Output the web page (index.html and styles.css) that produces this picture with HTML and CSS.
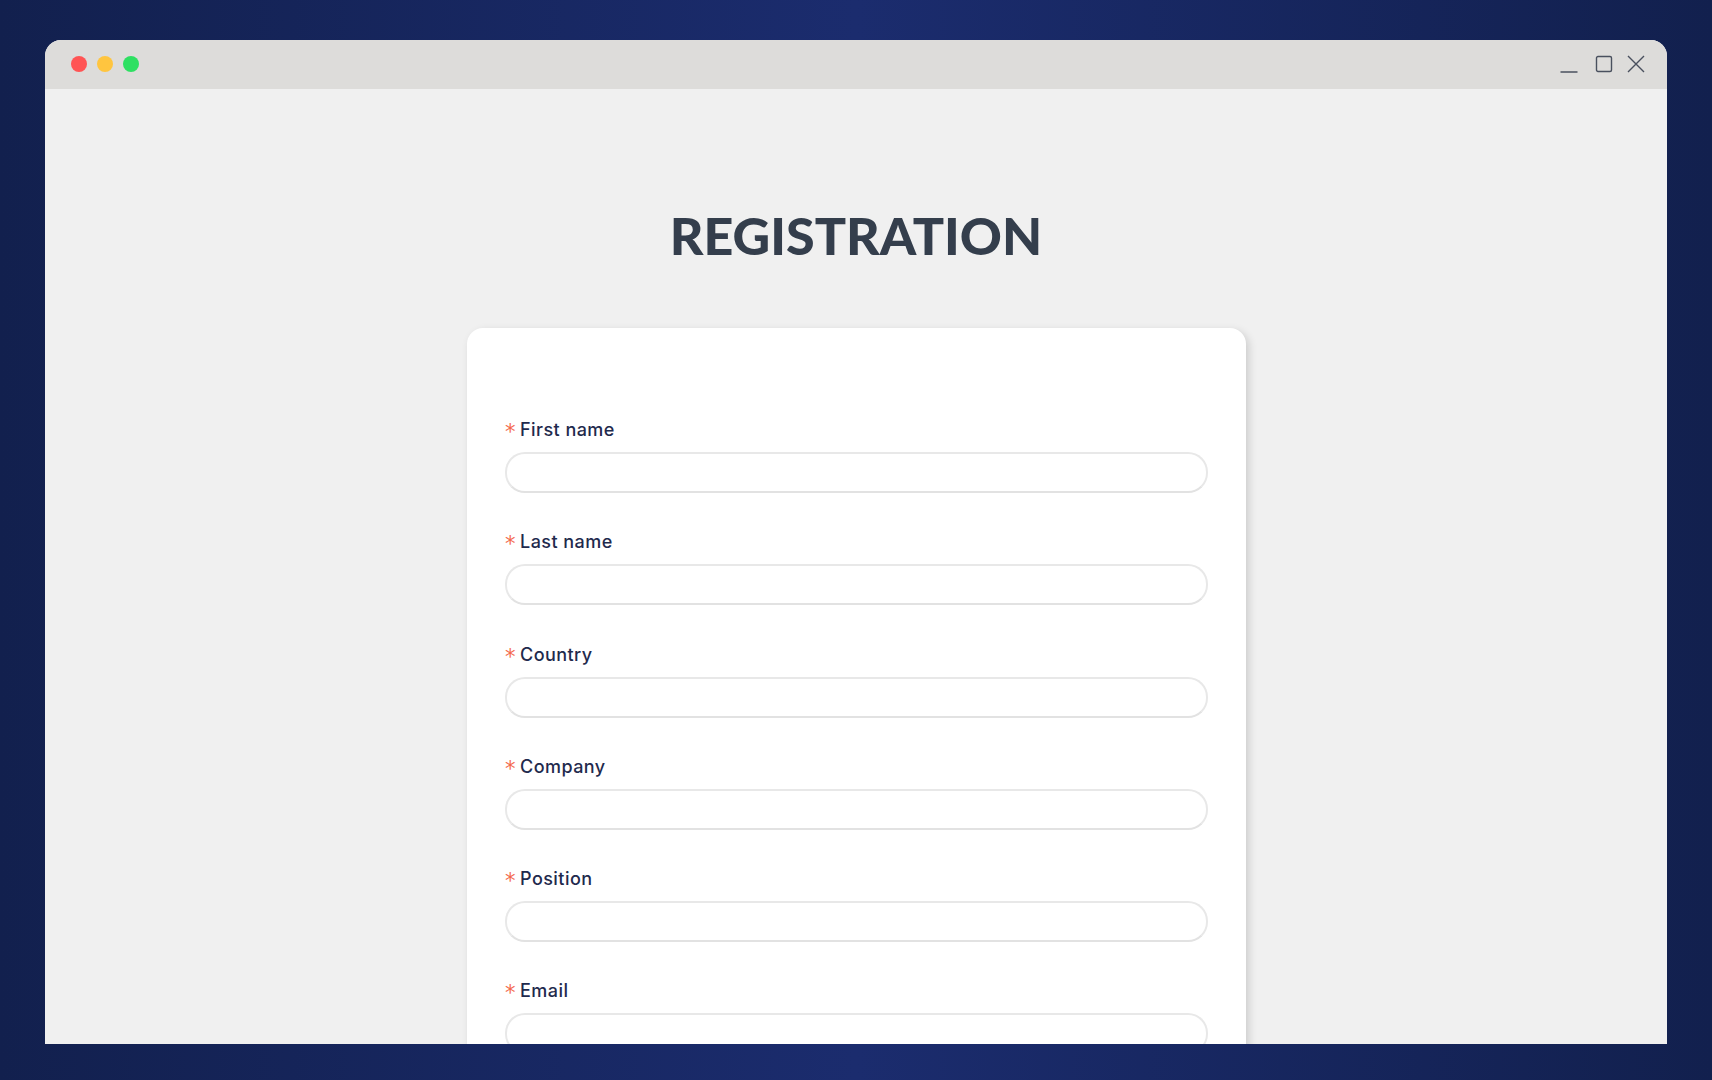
FILE: index.html
```html
<!DOCTYPE html>
<html lang="en">
<head>
  <meta charset="UTF-8" />
  <meta name="viewport" content="width=device-width, initial-scale=1" />
  <title>Registration</title>
  <link rel="stylesheet" href="styles.css">
</head>
<body>
  <div class="window">
    <div class="titlebar">
      <div class="lights">
        <span class="light red"></span>
        <span class="light yellow"></span>
        <span class="light green"></span>
      </div>
      <div class="controls">
        <svg width="18" height="18" viewBox="0 0 18 18"><path d="M0.5 17H17.5" /></svg>
        <svg class="max" width="18" height="18" viewBox="0 0 18 18"><rect x="1.5" y="1.5" width="15" height="15" rx="1.5" /></svg>
        <svg class="close" width="18" height="18" viewBox="0 0 18 18"><path d="M1 1L17 17M17 1L1 17" /></svg>
      </div>
    </div>
    <div class="content">
      <h1 class="title">REGISTRATION</h1>
      <form class="card">
        <div class="field">
          <label><span class="star">*</span>First name</label>
          <input type="text" />
        </div>
        <div class="field">
          <label><span class="star">*</span>Last name</label>
          <input type="text" />
        </div>
        <div class="field">
          <label><span class="star">*</span>Country</label>
          <input type="text" />
        </div>
        <div class="field">
          <label><span class="star">*</span>Company</label>
          <input type="text" />
        </div>
        <div class="field">
          <label><span class="star">*</span>Position</label>
          <input type="text" />
        </div>
        <div class="field">
          <label><span class="star">*</span>Email</label>
          <input type="text" />
        </div>
      </form>
    </div>
  </div>
</body>
</html>
```

FILE: styles.css
```css
body {
  margin: 0;
  box-sizing: border-box;
  height: 1080px;
  padding: 40px 45px 36px;
  overflow: hidden;
  background: linear-gradient(90deg, #12204e 0%, #1b2c6e 50%, #12204e 100%);
  font-family: Inter, "Liberation Sans", sans-serif;
}

.window {
  height: 100%;
  display: flex;
  flex-direction: column;
  overflow: hidden;
  border-radius: 16px 16px 0 0;
  background: #f0f0f0;
}

.titlebar {
  flex: none;
  height: 49px;
  box-sizing: border-box;
  padding: 0 22px 0 26px;
  display: flex;
  align-items: center;
  justify-content: space-between;
  background: #dddcda;
}

.lights {
  display: flex;
  gap: 10px;
  margin-bottom: 1px;
}

.light {
  width: 16px;
  height: 16px;
  border-radius: 50%;
}

.red { background: #ff5454; }
.yellow { background: #ffc53f; }
.green { background: #2ee062; }

.controls {
  display: flex;
  margin-bottom: 1px;
}

.controls svg {
  fill: none;
  stroke: #49505e;
  stroke-width: 1.4;
}

.controls .max {
  margin-left: 17px;
}

.controls .close {
  margin-left: 14px;
}

.content {
  flex: 1;
  min-height: 0;
  display: flex;
  flex-direction: column;
  align-items: center;
}

.title {
  margin: 114px 0 61px;
  font-family: Lato, sans-serif;
  font-size: 52px;
  line-height: 64px;
  font-weight: 900;
  color: #343e4c;
}

.card {
  flex: none;
  width: 779px;
  margin-left: 1px;
  box-sizing: border-box;
  padding: 91px 38px 0;
  border-radius: 16px 16px 0 0;
  background: #fff;
  box-shadow: 3px 3px 8px rgba(0, 0, 0, 0.15);
}

.field {
  margin-bottom: 38.25px;
}

.field label {
  display: block;
  margin-bottom: 11px;
  font-size: 18px;
  line-height: 22px;
  font-weight: 500;
  letter-spacing: 0.45px;
  color: #1f2a4d;
}

.star {
  display: inline-block;
  width: 15px;
  font-family: "DejaVu Sans", sans-serif;
  font-size: 21px;
  line-height: 0;
  letter-spacing: 0;
  color: #f4694d;
  vertical-align: -3px;
}

.field input {
  display: block;
  box-sizing: border-box;
  width: 100%;
  height: 41px;
  border: 2px solid #e8e8e8;
  border-bottom-color: #e2e2e2;
  border-radius: 20px;
  background: #fff;
  outline: none;
}
```
